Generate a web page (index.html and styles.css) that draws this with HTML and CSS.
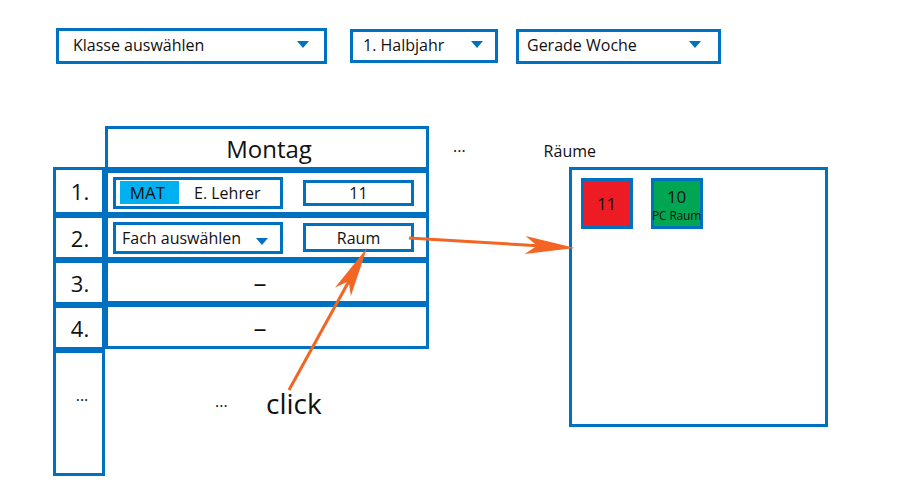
FILE: index.html
```html
<!DOCTYPE html>
<html lang="de">
<head>
<meta charset="utf-8">
<title>Stundenplan</title>
<link rel="stylesheet" href="styles.css">
</head>
<body>
<div class="page">
  <div class="filters">
    <div class="dd dd-klasse"><span>Klasse auswählen</span><span class="caret"></span></div>
    <div class="dd dd-halbjahr"><span>1. Halbjahr</span><span class="caret"></span></div>
    <div class="dd dd-woche"><span>Gerade Woche</span><span class="caret"></span></div>
  </div>

  <div class="main">
    <div class="timetable">
      <div class="numcol">
        <div class="num n-first">1.</div>
        <div class="num">2.</div>
        <div class="num">3.</div>
        <div class="num">4.</div>
        <div class="num num-more">...</div>
      </div>
      <div class="daycol">
        <div class="dayhead">Montag</div>
        <div class="slot">
          <div class="subject">
            <span class="subj-tag">MAT</span>
            <span class="teacher">E. Lehrer</span>
          </div>
          <div class="roombox rb-set">11</div>
        </div>
        <div class="slot">
          <div class="subject subject-select">
            <span>Fach auswählen</span>
            <span class="caret caret-small"></span>
          </div>
          <div class="roombox rb-empty">Raum</div>
        </div>
        <div class="slot slot-short slot-empty">–</div>
        <div class="slot slot-empty">–</div>
        <div class="daymore">...</div>
      </div>
    </div>

    <div class="moredays">...</div>

    <div class="rooms">
      <div class="rooms-label">Räume</div>
      <div class="rooms-panel">
        <div class="tile tile-red"><span class="tile-num">11</span></div>
        <div class="tile tile-green"><span class="tile-num">10</span><span class="tile-sub">PC Raum</span></div>
      </div>
    </div>
  </div>

  <svg class="arrows" width="900" height="500" viewBox="0 0 900 500">
    <line x1="409" y1="238" x2="538" y2="245.7" />
    <polygon points="575,248 525.6,236 537.1,245.7 524.6,254" />
    <line x1="289" y1="390" x2="349" y2="281" />
    <polygon points="367,248 350.9,296.1 348.7,281.3 335.1,287.5" />
  </svg>
  <span class="click">click</span>
</div>
</body>
</html>
```

FILE: styles.css
```css
* { box-sizing: border-box; }

html, body {
  margin: 0;
  padding: 0;
  background: #ffffff;
}

body {
  font-family: "Open Sans", "Noto Sans", sans-serif;
  font-size: 16px;
  color: #111111;
}

.page {
  position: relative;
  width: 900px;
  height: 500px;
  overflow: hidden;
}

/* ---------- top filters ---------- */
.filters {
  display: flex;
  align-items: center;
  padding: 28px 0 0 56px;
  height: 64px;
}

.dd {
  display: flex;
  align-items: center;
  justify-content: space-between;
  border: 3px solid #0070c0;
  height: 36px;
  line-height: 20px;
  padding-bottom: 2px;
}

.dd-klasse {
  width: 271px;
  padding-left: 14px;
  padding-right: 15px;
}

.dd-halbjahr {
  width: 148px;
  height: 34px;
  margin-left: 23px;
  padding-left: 10px;
  padding-right: 12px;
}

.dd-woche {
  width: 205px;
  height: 35px;
  margin-left: 18px;
  padding-left: 8px;
  padding-right: 17px;
}

.caret {
  width: 0;
  height: 0;
  border-left: 6px solid transparent;
  border-right: 6px solid transparent;
  border-top: 7px solid #0070c0;
  margin-top: -2px;
}

.caret-small {
  margin-top: 7px;
  margin-right: 12px;
}

/* ---------- main area ---------- */
.main {
  display: flex;
  align-items: flex-start;
  margin-top: 62px;
  padding-left: 53px;
}

.timetable {
  display: flex;
  align-items: flex-start;
}

.numcol {
  display: flex;
  flex-direction: column;
  width: 52px;
  margin-top: 41px;
}

.num {
  display: flex;
  align-items: center;
  justify-content: center;
  height: 45px;
  border: 3px solid #0070c0;
  font-size: 22px;
  padding-left: 2px;
}

.n-first { height: 48px; }

.num-more {
  height: 126px;
  align-items: flex-start;
  padding-top: 31px;
  padding-left: 6px;
  font-size: 16px;
}

.daycol {
  display: flex;
  flex-direction: column;
  width: 324px;
}

.dayhead {
  display: flex;
  align-items: center;
  justify-content: center;
  height: 44px;
  border: 3px solid #0070c0;
  font-size: 24px;
  padding-left: 4px;
}

.slot {
  display: flex;
  align-items: center;
  height: 45px;
  border: 3px solid #0070c0;
  padding-left: 5px;
}

.slot-short { height: 44px; }

.slot-empty {
  justify-content: center;
  padding-left: 0;
  padding-right: 14px;
  font-size: 26px;
}

.subject {
  display: flex;
  align-items: center;
  width: 170px;
  height: 32px;
  border: 3px solid #0070c0;
  padding-left: 4px;
}

.subj-tag {
  display: flex;
  align-items: center;
  justify-content: center;
  width: 59px;
  height: 23px;
  background: #00b0f0;
  font-size: 17px;
  padding-right: 4px;
}

.teacher {
  margin-left: 15px;
}

.subject-select {
  justify-content: space-between;
  padding-left: 6px;
}

.roombox {
  display: flex;
  align-items: center;
  justify-content: center;
  width: 111px;
  border: 3px solid #0070c0;
  margin-left: 20px;
}

.rb-set { height: 26px; }
.rb-empty { height: 29px; }

.daymore {
  margin-top: 42px;
  padding-left: 110px;
  line-height: 20px;
}

.moredays {
  margin-left: 24px;
  margin-top: 10px;
  line-height: 20px;
}

/* ---------- rooms ---------- */
.rooms {
  margin-left: 78px;
  margin-top: 15px;
}

.rooms-label {
  line-height: 20px;
  margin-bottom: 6px;
}

.rooms-panel {
  display: flex;
  align-items: flex-start;
  gap: 18px;
  width: 259px;
  height: 260px;
  margin-left: 25px;
  border: 3px solid #0070c0;
  padding: 8px 0 0 9px;
}

.tile {
  display: flex;
  flex-direction: column;
  align-items: center;
  justify-content: center;
  width: 52px;
  height: 51px;
  border: 3px solid #0070c0;
}

.tile-red { background: #ed1c24; }

.tile-green {
  background: #00a651;
  justify-content: flex-start;
  padding-top: 5px;
}

.tile-num {
  font-size: 17px;
  line-height: 22px;
}

.tile-sub {
  font-size: 12px;
  line-height: 15px;
  white-space: nowrap;
  letter-spacing: -0.2px;
}

/* ---------- annotation overlay ---------- */
.arrows {
  position: absolute;
  left: 0;
  top: 0;
  pointer-events: none;
}

.arrows line {
  stroke: #f26522;
  stroke-width: 3;
}

.arrows polygon {
  fill: #f26522;
}

.click {
  position: absolute;
  left: 266px;
  top: 389px;
  font-size: 28px;
  line-height: 28px;
  color: #111111;
}
```
